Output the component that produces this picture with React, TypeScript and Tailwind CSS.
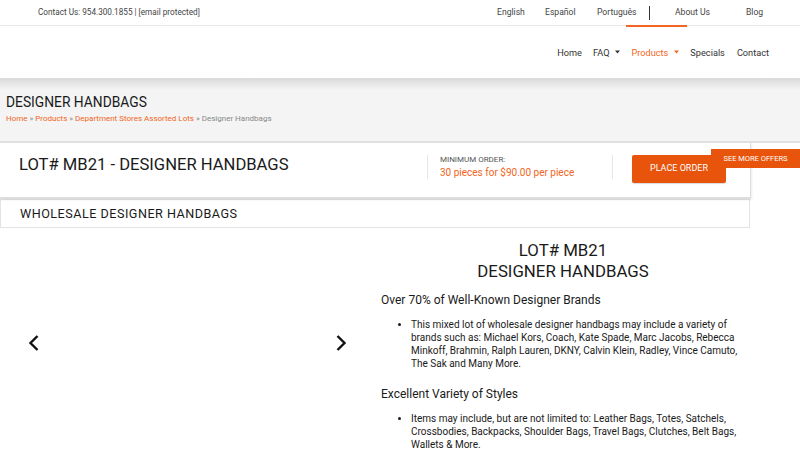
import React from "react";

function Caret({ color }: { color: string }) {
  return (
    <svg width="5" height="4" viewBox="0 0 5 4" className="ml-[6px]">
      <path d="M0 0.5 L5 0.5 L2.5 3.5 Z" fill={color} />
    </svg>
  );
}

function Chevron({ dir }: { dir: "left" | "right" }) {
  return (
    <svg width="14" height="18" viewBox="0 0 14 18">
      {dir === "left" ? (
        <path d="M10.5 2 L3.5 9 L10.5 16" fill="none" stroke="#111" strokeWidth="2.4" />
      ) : (
        <path d="M3.5 2 L10.5 9 L3.5 16" fill="none" stroke="#111" strokeWidth="2.4" />
      )}
    </svg>
  );
}

export default function App() {
  return (
    <div className="w-[800px] h-[450px] overflow-hidden bg-white font-['Roboto',sans-serif] text-[#222]">
      {/* Top bar */}
      <div className="relative h-[26px] border-b border-[#e8e8e8] flex items-center text-[#444]">
        <span className="ml-[38px] text-[8.2px]">Contact Us: 954.300.1855 | [email protected]</span>
        <div className="ml-auto flex items-center text-[8.6px]">
          <span className="w-[48px]">English</span>
          <span className="w-[52px]">Español</span>
          <span className="w-[52px]">Português</span>
          <span className="w-[26px] flex">
            <span className="w-px h-[14px] bg-[#333]" />
          </span>
          <span className="w-[71px]">About Us</span>
          <span className="w-[54px]">Blog</span>
        </div>
        <div className="absolute left-[626px] bottom-[-2px] w-[61px] h-[2px] bg-[#f26522]" />
      </div>

      {/* Main nav */}
      <div className="h-[52px] pt-[1px] flex items-center justify-end pr-[31px] text-[9.2px] text-[#333]">
        <span>Home</span>
        <span className="ml-[11px] flex items-center">
          FAQ
          <Caret color="#333" />
        </span>
        <span className="ml-[11px] flex items-center text-[#f26522]">
          Products
          <Caret color="#f26522" />
        </span>
        <span className="ml-[11px]">Specials</span>
        <span className="ml-[12px]">Contact</span>
      </div>

      {/* Page header */}
      <div className="h-[65px] bg-[linear-gradient(to_bottom,#d9d9d9_0px,#f4f4f4_12px,#f4f4f4_100%)] border-b-2 border-[#e0e0e0] px-[6px] pt-[15px]">
        <div className="text-[13.8px] leading-[18px] text-[#1a1a1a]">DESIGNER HANDBAGS</div>
        <div className="mt-[2px] text-[8px] text-[#888]">
          <span className="text-[#f26522]">Home</span> » <span className="text-[#f26522]">Products</span> »{" "}
          <span className="text-[#f26522]">Department Stores Assorted Lots</span> » Designer Handbags
        </div>
      </div>

      {/* Lot card */}
      <div className="relative w-[751px] h-[56px] bg-white border-r border-b-2 border-[#dedede] shadow-[1px_1px_2px_rgba(0,0,0,0.08)] flex items-center pb-[6px]">
        <div className="pl-[19px] w-[427px] mt-[-3px] text-[16.6px] text-[#1a1a1a]">
          LOT# MB21 - DESIGNER HANDBAGS
        </div>
        <div className="w-px h-[24px] bg-[#e6e6e6]" />
        <div className="pl-[12px] w-[184px]">
          <div className="text-[8px] leading-[11px] text-[#555]">MINIMUM ORDER:</div>
          <div className="text-[10px] leading-[15px] text-[#f26522]">30 pieces for $90.00 per piece</div>
        </div>
        <div className="w-px h-[24px] bg-[#e6e6e6]" />
        <div className="ml-[19px] w-[94px] h-[28px] mt-[3px] rounded-[2px] bg-[#e8540c] text-white text-[9px] flex items-center justify-center shadow-[0_1px_1px_rgba(0,0,0,0.15)]">
          PLACE ORDER
        </div>
        <div className="absolute left-[711px] top-[6px] w-[89px] h-[19px] bg-[#e8540c] text-white text-[7.5px] flex items-center justify-center">
          SEE MORE OFFERS
        </div>
      </div>

      {/* Subtitle bar */}
      <div className="w-[750px] h-[29px] border border-[#e3e3e3] flex items-center pl-[19px] pt-[1px] text-[12.6px] tracking-[0.5px] text-[#1a1a1a]">
        WHOLESALE DESIGNER HANDBAGS
      </div>

      {/* Content */}
      <div className="flex">
        <div className="w-[375px] h-[230px] flex items-center justify-between pl-[27px] pr-[27px]">
          <Chevron dir="left" />
          <Chevron dir="right" />
        </div>
        <div className="w-[370px] pl-[6px] pt-[12px] text-[#1a1a1a]">
          <div className="text-center text-[16.8px] leading-[21px]">
            LOT# MB21
            <br />
            DESIGNER HANDBAGS
          </div>
          <div className="mt-[11px] text-[12px] leading-[15px]">Over 70% of Well-Known Designer Brands</div>
          <ul className="mt-[10px] ml-[30px] list-disc text-[10px] leading-[13px]">
            <li>
              This mixed lot of wholesale designer handbags may include a variety of brands such as: Michael Kors,
              Coach, Kate Spade, Marc Jacobs, Rebecca Minkoff, Brahmin, Ralph Lauren, DKNY, Calvin Klein, Radley,
              Vince Camuto, The Sak and Many More.
            </li>
          </ul>
          <div className="mt-[17px] text-[12px] leading-[15px]">Excellent Variety of Styles</div>
          <ul className="mt-[10px] ml-[30px] list-disc text-[10px] leading-[13px]">
            <li>
              Items may include, but are not limited to: Leather Bags, Totes, Satchels, Crossbodies, Backpacks,
              Shoulder Bags, Travel Bags, Clutches, Belt Bags, Wallets &amp; More.
            </li>
          </ul>
        </div>
      </div>
    </div>
  );
}
